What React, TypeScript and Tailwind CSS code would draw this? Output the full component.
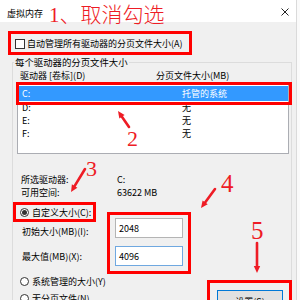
import React from "react";

const RED = "#ee1c25";

function Arrow({ x1, y1, x2, y2, w = 2.6, head = 7, hw = 3.2 }: { x1: number; y1: number; x2: number; y2: number; w?: number; head?: number; hw?: number }) {
  const dx = x2 - x1;
  const dy = y2 - y1;
  const L = Math.hypot(dx, dy);
  const ux = dx / L;
  const uy = dy / L;
  const bx = x2 - ux * head;
  const by = y2 - uy * head;
  const px = -uy;
  const py = ux;
  return (
    <g>
      <line x1={x1} y1={y1} x2={bx + ux} y2={by + uy} stroke={RED} strokeWidth={w} strokeLinecap="round" />
      <polygon points={`${x2},${y2} ${bx + px * hw},${by + py * hw} ${bx - px * hw},${by - py * hw}`} fill={RED} />
    </g>
  );
}

function Radio({ checked }: { checked?: boolean }) {
  return (
    <span className="w-[9px] h-[9px] rounded-full border border-[#333333] bg-white flex items-center justify-center shrink-0">
      {checked && <span className="w-[5px] h-[5px] rounded-full bg-[#333333]" />}
    </span>
  );
}

export default function App() {
  return (
    <div className="relative w-[300px] h-[300px] overflow-hidden bg-[#fafafa] text-black font-['Noto_Sans_CJK_SC',sans-serif] text-[9px] leading-[9px]">
      <div className="w-[297px] h-[300px] border-r border-[#dadada] bg-[#f0f0f0]">
        {/* title bar */}
        <div className="h-[22px] bg-white flex items-start justify-between pl-[7px] pr-[7px]">
          <span className="mt-[9px] text-[9px]">虚拟内存</span>
          <svg className="mt-[8px]" width="8" height="8" viewBox="0 0 8 8">
            <path d="M0.5 0.5L7.5 7.5M7.5 0.5L0.5 7.5" stroke="#222" strokeWidth="1" />
          </svg>
        </div>

        {/* checkbox */}
        <div className="mt-[16px] ml-[15px] h-[11px] flex items-center gap-[2px]">
          <span className="w-[10px] h-[10px] border border-[#333333] bg-white shrink-0" />
          <span>自动管理所有驱动器的分页文件大小(A)</span>
        </div>

        {/* group */}
        <fieldset className="mt-[9px] ml-[12px] w-[280px] border border-[#dcdcdc] pl-[4px] pr-[1px] pb-[20px]">
          <legend className="-ml-[3px] px-[1px] text-[9.4px] leading-[9px]">每个驱动器的分页文件大小</legend>

          <div className="mt-[4px] flex pl-[3px]">
            <span className="w-[136px]">驱动器 [卷标](D)</span>
            <span>分页文件大小(MB)</span>
          </div>

          <div className="mt-[4px] h-[70px] w-[272px] border border-[#abadb3] bg-white pt-[1px]">
            <div className="h-[15px] bg-[#3399ff] text-white flex items-center pl-[4px]">
              <span className="w-[160px]">C:</span>
              <span>托管的系统</span>
            </div>
            {["D:", "E:", "F:"].map((d) => (
              <div key={d} className="h-[13px] flex items-center pl-[4px]">
                <span className="w-[160px]">{d}</span>
                <span>无</span>
              </div>
            ))}
          </div>

          <div className="mt-[19px] pl-[4px] leading-[13px]">
            <div className="flex">
              <span className="w-[96px]">所选驱动器:</span>
              <span>C:</span>
            </div>
            <div className="flex">
              <span className="w-[96px]">可用空间:</span>
              <span>63622 MB</span>
            </div>
          </div>

          <div className="mt-[7px] h-[12px] flex items-center gap-[3px] pl-[3px]">
            <Radio checked />
            <span>自定义大小(C):</span>
          </div>

          <div className="flex h-[20px] pl-[5px]">
            <span className="w-[93px] mt-[9px]">初始大小(MB)(I):</span>
            <div className="w-[68px] h-[20px] border border-[#b4b4b4] bg-white pl-[3px] flex items-center">2048</div>
          </div>
          <div className="mt-[8px] flex h-[20px] pl-[5px]">
            <span className="w-[93px] mt-[6px]">最大值(MB)(X):</span>
            <div className="w-[68px] h-[20px] border border-[#6fa8e0] bg-white pl-[3px] flex items-center">4096</div>
          </div>

          <div className="mt-[9px] flex justify-between">
            <div className="flex flex-col gap-[5px] pl-[3px]">
              <div className="h-[12px] flex items-center gap-[3px]">
                <Radio />
                <span>系统管理的大小(Y)</span>
              </div>
              <div className="h-[12px] flex items-center gap-[3px]">
                <Radio />
                <span>无分页文件(N)</span>
              </div>
            </div>
            <div className="mt-[15px] mr-[7px] w-[66px] h-[22px] bg-[#e1e1e1] border border-[#0078d7] flex items-center justify-center">
              设置(S)
            </div>
          </div>
        </fieldset>
      </div>

      {/* annotations */}
      <span className="absolute left-[49px] top-[5px] text-[21px] leading-[21px] font-light text-[#ee1c25] font-['Liberation_Serif','Noto_Sans_CJK_SC',serif] whitespace-nowrap">
        1、取消勾选
      </span>
      <div className="absolute left-[8px] top-[31px] w-[184px] h-[24px] border-[3px] border-[#ff0000]" />
      <div className="absolute left-[16px] top-[82px] w-[276px] h-[23px] border-[3px] border-[#ff0000]" />
      <div className="absolute left-[13px] top-[202px] w-[83px] h-[20px] border-[3px] border-[#ff0000]" />
      <div className="absolute left-[107px] top-[212px] w-[84px] h-[62px] border-[3px] border-[#ff0000]" />
      <div className="absolute left-[207px] top-[280px] w-[85px] h-[30px] border-[3px] border-[#ff0000]" />

      <span className="absolute left-[127px] top-[128px] text-[22px] leading-[22px] text-[#ee1c25] font-['Liberation_Serif',serif]">2</span>
      <span className="absolute left-[86px] top-[158px] text-[22px] leading-[22px] text-[#ee1c25] font-['Liberation_Serif',serif]">3</span>
      <span className="absolute left-[221px] top-[171px] text-[25px] leading-[25px] text-[#ee1c25] font-['Liberation_Serif',serif]">4</span>
      <span className="absolute left-[251px] top-[218px] text-[25px] leading-[25px] text-[#ee1c25] font-['Liberation_Serif',serif]">5</span>

      <svg className="absolute left-0 top-0" width="300" height="300" viewBox="0 0 300 300">
        <Arrow x1={129} y1={127} x2={118} y2={111} />
        <Arrow x1={85} y1={169} x2={71} y2={192} />
        <Arrow x1={215} y1={189} x2={201} y2={208} />
        <Arrow x1={257} y1={243} x2={257} y2={273} />
      </svg>
    </div>
  );
}
